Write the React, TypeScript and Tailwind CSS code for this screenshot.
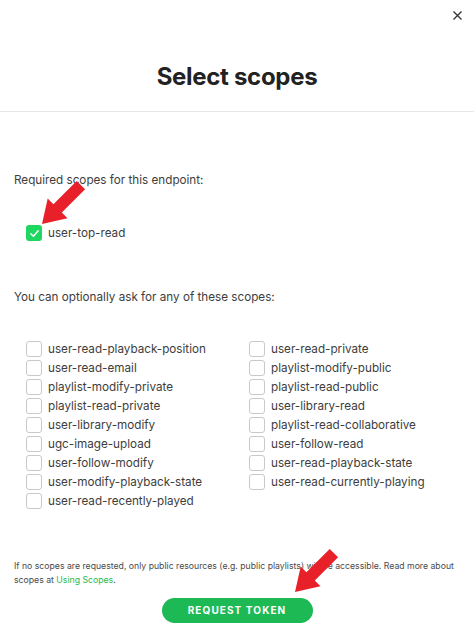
import React from "react";

const leftScopes = [
  "user-read-playback-position",
  "user-read-email",
  "playlist-modify-private",
  "playlist-read-private",
  "user-library-modify",
  "ugc-image-upload",
  "user-follow-modify",
  "user-modify-playback-state",
  "user-read-recently-played",
];

const rightScopes = [
  "user-read-private",
  "playlist-modify-public",
  "playlist-read-public",
  "user-library-read",
  "playlist-read-collaborative",
  "user-follow-read",
  "user-read-playback-state",
  "user-read-currently-playing",
];

function Box({ checked = false }: { checked?: boolean }) {
  if (checked) {
    return (
      <span className="flex h-4 w-4 flex-none items-center justify-center rounded-[3px] bg-[#1ed760]">
        <svg width="11" height="11" viewBox="0 0 12 12" fill="none">
          <path d="M2 6.3 L4.8 9 L10 3" stroke="white" strokeWidth="1.6" strokeLinecap="round" strokeLinejoin="round" />
        </svg>
      </span>
    );
  }
  return <span className="h-4 w-4 flex-none rounded-[3px] border border-[#c9c9c9] bg-white" />;
}

function ScopeRow({ name }: { name: string }) {
  return (
    <label className="flex h-4 items-center gap-[6px]">
      <Box />
      <span className="text-[11.7px] leading-4 text-[#3d3d3d]">{name}</span>
    </label>
  );
}

// red annotation arrow, drawn pointing down-left
function Arrow({ className }: { className: string }) {
  return (
    <svg className={className} width="48" height="48" viewBox="0 0 48 48">
      <polygon
        points="0,48 5.7,22.5 11.4,28.2 34.7,4.9 43.1,13.3 19.8,36.6 25.5,42.3"
        fill="#e8202a"
      />
    </svg>
  );
}

export default function App() {
  return (
    <div
      className="relative h-[639px] w-[474px] overflow-hidden bg-white"
      style={{ fontFamily: "Inter, 'Liberation Sans', sans-serif" }}
    >
      <button className="absolute right-[12px] top-[11px] text-[#333]">
        <svg width="9" height="9" viewBox="0 0 9 9">
          <path d="M0.5 0.5 L8.5 8.5 M8.5 0.5 L0.5 8.5" stroke="#333" strokeWidth="1.3" />
        </svg>
      </button>

      <div className="flex h-[112px] items-center justify-center border-b border-[#e6e6e6] pt-[42px]">
        <h1 className="text-[24px] font-bold leading-[30px] tracking-[-0.3px] text-[#222]">Select scopes</h1>
      </div>

      <div className="px-[14px]">
        <p className="mt-[60px] text-[11.7px] leading-4 text-[#3d3d3d]">Required scopes for this endpoint:</p>
        <div className="ml-[12px] mt-[37px] flex h-4 items-center gap-[6px]">
          <Box checked />
          <span className="text-[11.7px] leading-4 text-[#3d3d3d]">user-top-read</span>
        </div>

        <p className="mt-[48px] text-[11.7px] leading-4 text-[#3d3d3d]">
          You can optionally ask for any of these scopes:
        </p>

        <div className="ml-[12px] mt-[36px] grid grid-cols-[223px_1fr]">
          <div className="flex flex-col gap-[3px]">
            {leftScopes.map((s) => (
              <ScopeRow key={s} name={s} />
            ))}
          </div>
          <div className="flex flex-col gap-[3px]">
            {rightScopes.map((s) => (
              <ScopeRow key={s} name={s} />
            ))}
          </div>
        </div>

        <p className="mt-[50px] text-[8.7px] leading-[14px] text-[#4a4a4a]">
          If no scopes are requested, only public resources (e.g. public playlists) will be accessible. Read more about
          scopes at <a className="text-[#1db954]">Using Scopes</a>.
        </p>

        <div className="mt-[11px] flex justify-center">
          <button className="h-[25px] w-[151px] rounded-full bg-[#1db954] text-[10px] font-bold tracking-[1.1px] text-white">
            REQUEST TOKEN
          </button>
        </div>
      </div>

      <Arrow className="absolute left-[42px] top-[176px]" />
      <Arrow className="absolute left-[295px] top-[544px]" />
    </div>
  );
}
